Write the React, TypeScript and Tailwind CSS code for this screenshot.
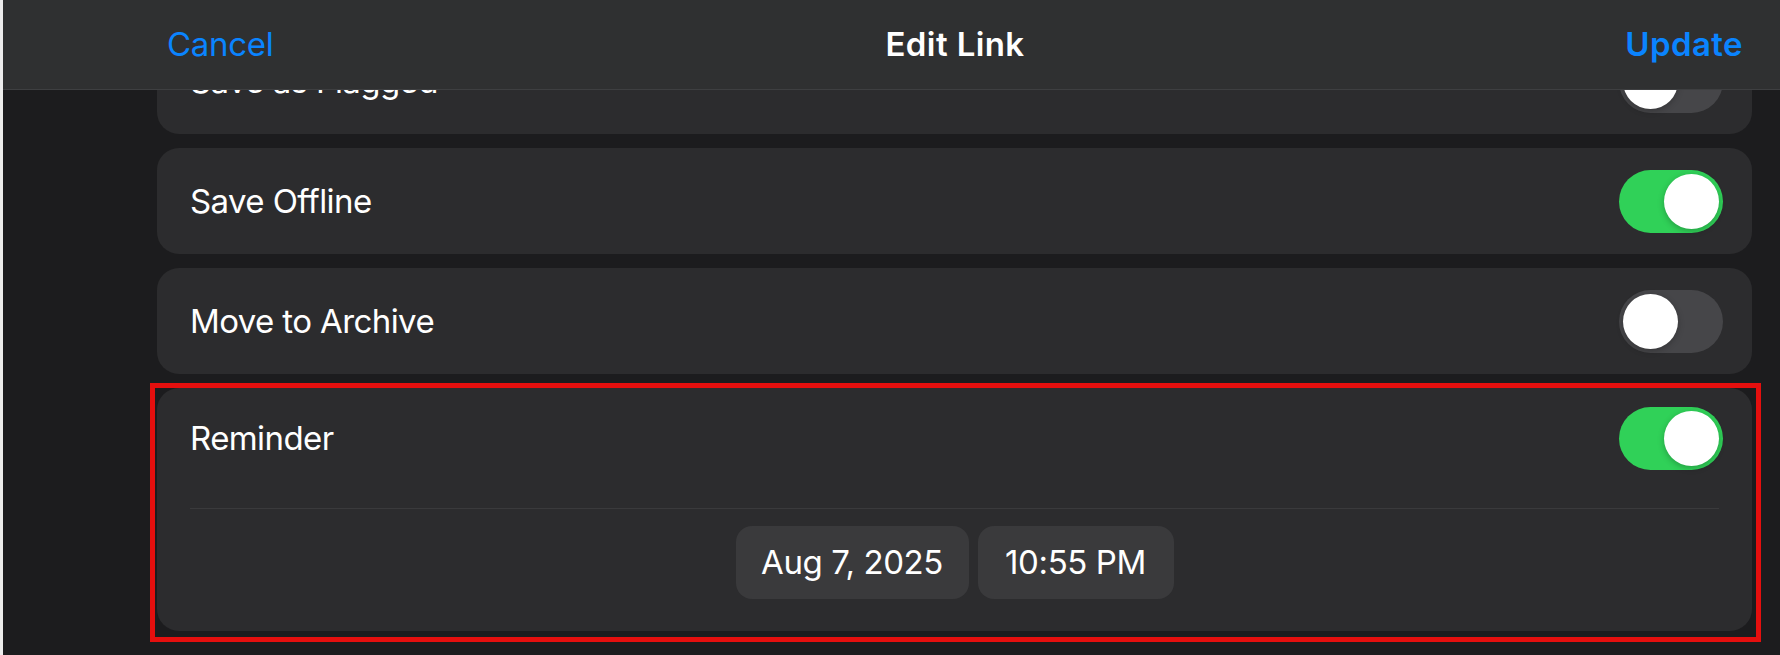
import React from "react";

const font = { fontFamily: "Inter, 'Noto Sans', sans-serif" };

const Toggle = ({ on }: { on: boolean }) => (
  <div
    className={
      on
        ? "relative -mr-[4px] h-[63px] w-[104px] shrink-0 rounded-full bg-[#30d158]"
        : "relative -mr-[4px] h-[63px] w-[104px] shrink-0 rounded-full bg-[#464649]"
    }
  >
    <div
      className={
        on
          ? "absolute right-[4px] top-[4px] h-[55px] w-[55px] rounded-full bg-white shadow-[0_2px_6px_rgba(0,0,0,0.25)]"
          : "absolute left-[4px] top-[4px] h-[55px] w-[55px] rounded-full bg-white shadow-[0_2px_6px_rgba(0,0,0,0.25)]"
      }
    />
  </div>
);

const ToggleCard = ({ label, on }: { label: string; on: boolean }) => (
  <div className="flex h-[106px] shrink-0 items-center justify-between rounded-[22px] bg-[#2c2c2e] px-[33px]">
    <span className="text-[33px] leading-none tracking-[-0.6px] text-white">{label}</span>
    <Toggle on={on} />
  </div>
);

export default function App() {
  return (
    <div className="flex h-[655px] w-full overflow-hidden bg-[#1c1c1e]" style={font}>
      <div className="w-[3px] shrink-0 bg-[#ececec]" />
      <div className="relative flex-1">
        {/* list */}
        <div className="flex flex-col gap-[14px] pl-[154px] pr-[28px] pt-[28px]">
          <ToggleCard label="Save as Flagged" on={false} />
          <ToggleCard label="Save Offline" on={true} />
          <ToggleCard label="Move to Archive" on={false} />

          <div className="relative">
            <div className="flex h-[243px] flex-col rounded-[22px] bg-[#2c2c2e]">
              <div className="flex h-[101px] shrink-0 items-center justify-between px-[33px]">
                <span className="text-[33px] leading-none tracking-[-0.6px] text-white">Reminder</span>
                <Toggle on={true} />
              </div>
              <div className="mx-[33px] mt-[19px] h-px bg-[#3a3a3c]" />
              <div className="mt-[17px] flex justify-center gap-[9px]">
                <div className="flex h-[73px] w-[233px] items-center justify-center rounded-[16px] bg-[#3a3a3c] text-[33px] tracking-[-0.4px] text-white">
                  Aug 7, 2025
                </div>
                <div className="flex h-[73px] w-[196px] items-center justify-center rounded-[16px] bg-[#3a3a3c] text-[33px] tracking-[-0.4px] text-white">
                  10:55 PM
                </div>
              </div>
            </div>
            {/* annotation box */}
            <div className="pointer-events-none absolute -bottom-[11px] -left-[7px] -right-[9px] -top-[5px] border-[5px] border-[#e50f0e]" />
          </div>
        </div>

        {/* nav bar */}
        <div className="absolute inset-x-0 top-0 flex h-[90px] items-center justify-between border-b border-[#3e3f41] bg-[#2f3031] pl-[164px] pr-[37px]">
          <span className="text-[33px] leading-none tracking-[-0.3px] text-[#0a84ff]">Cancel</span>
          <span className="absolute left-[164px] right-[37px] text-center text-[33px] font-semibold leading-none tracking-[0.4px] text-white">
            Edit Link
          </span>
          <span className="relative text-[33px] font-semibold leading-none tracking-[0.4px] text-[#0a84ff]">Update</span>
        </div>
      </div>
    </div>
  );
}
